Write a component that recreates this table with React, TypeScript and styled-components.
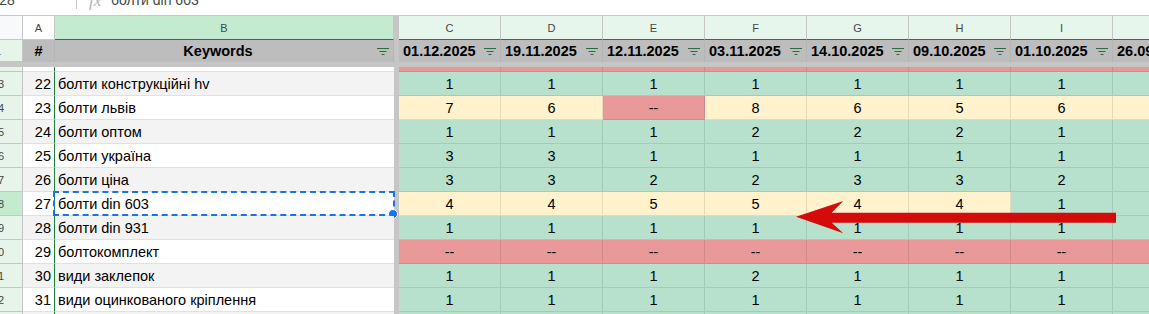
import React from 'react';
import styled, { createGlobalStyle } from 'styled-components';

const GlobalStyle = createGlobalStyle`
	html, body {
		margin: 0;
		padding: 0;
		background: #ffffff;
	}
	body {
		font-family: "Liberation Sans", Arial, sans-serif;
	}
`;

type Tone = 'green' | 'yellow' | 'red';

const toneBg: Record<Tone, string> = {
	green: '#b7e1cd',
	yellow: '#fff2cc',
	red: '#ea9999',
};

const GRID = '#e1e1e1';
const HEAD_LINE = '#c4c7c5';
const SHEET_GREEN = '#188038';

const Sheet = styled.div`
	position: relative;
	width: 1149px;
	height: 314px;
	overflow: hidden;
	font-size: 14.5px;
	color: #000;
`;

const FormulaBar = styled.div`
	display: flex;
	align-items: flex-end;
	height: 15px;
	border-bottom: 1px solid ${HEAD_LINE};
	overflow: hidden;
	color: #444746;
	font-size: 14px;
	line-height: 16px;
`;

const NameBox = styled.div`
	display: flex;
	justify-content: space-between;
	width: 80px;
	margin-left: -10px;
	margin-bottom: 7px;
	padding-right: 6px;
`;

const Caret = styled.span`
	font-size: 11px;
	line-height: 10px;
	margin-top: -5px;
`;

const Separator = styled.div`
	align-self: flex-start;
	width: 1px;
	height: 9px;
	margin: 0 12px 0 0;
	background: #c4c7c5;
`;

const Fx = styled.span`
	font-family: "Liberation Serif", serif;
	font-style: italic;
	font-size: 17px;
	color: #b0b3b6;
	margin-bottom: 6px;
	width: 22px;
`;

const FormulaText = styled.span`
	margin-bottom: 7px;
`;

const Row = styled.div<{ $h: number }>`
	display: flex;
	height: ${(p) => p.$h}px;
`;

const Corner = styled.div`
	flex: 0 0 23px;
	box-sizing: border-box;
	background: #f8f9fa;
	border-right: 1px solid ${HEAD_LINE};
	border-bottom: 1px solid ${HEAD_LINE};
`;

const ColLetter = styled.div<{ $w: number; $bg: string; $line: string }>`
	flex: 0 0 ${(p) => p.$w}px;
	box-sizing: border-box;
	display: flex;
	align-items: center;
	justify-content: center;
	background: ${(p) => p.$bg};
	border-right: 1px solid ${HEAD_LINE};
	border-bottom: 1px solid ${(p) => p.$line};
	font-size: 11px;
	color: #444746;
`;

const Divider = styled.div`
	flex: 0 0 5px;
	background: #c6c6c6;
`;

const FreezeBar = styled.div`
	height: 5px;
	background: #c6c6c6;
`;

const RowNum = styled.div<{ $selected?: boolean }>`
	flex: 0 0 23px;
	box-sizing: border-box;
	display: flex;
	align-items: center;
	overflow: hidden;
	background: ${(p) => (p.$selected ? '#c4ead0' : '#e6f4ea')};
	border-right: 1px solid ${HEAD_LINE};
	border-bottom: 1px solid ${HEAD_LINE};
	font-size: 11px;
	color: #444746;
`;

const RowNumLabel = styled.span`
	flex: 0 0 46px;
	margin-left: -25px;
	text-align: center;
`;

const HeadCell = styled.div<{ $w: number }>`
	flex: 0 0 ${(p) => p.$w}px;
	box-sizing: border-box;
	display: flex;
	align-items: center;
	padding: 0 4px;
	background: #bdbdbd;
	border-right: 1px solid rgba(0, 0, 0, 0.04);
	font-weight: 700;
	white-space: nowrap;
	overflow: hidden;
`;

const HeadText = styled.span<{ $center?: boolean }>`
	flex: 1;
	text-align: ${(p) => (p.$center ? 'center' : 'left')};
`;

const NumCell = styled.div<{ $alt: boolean; $green?: boolean }>`
	flex: 0 0 32px;
	box-sizing: border-box;
	display: flex;
	align-items: center;
	justify-content: flex-end;
	padding-right: 3px;
	background: ${(p) => (p.$alt ? '#f3f3f3' : '#ffffff')};
	border-right: 1px solid ${(p) => (p.$green ? SHEET_GREEN : HEAD_LINE)};
	border-bottom: 1px solid ${GRID};
`;

const KeywordCell = styled.div<{ $alt: boolean }>`
	position: relative;
	flex: 0 0 339px;
	box-sizing: border-box;
	display: flex;
	align-items: center;
	padding-left: 3px;
	background: ${(p) => (p.$alt ? '#f3f3f3' : '#ffffff')};
	border-bottom: 1px solid ${GRID};
	white-space: nowrap;
`;

const ValueCell = styled.div<{ $tone: Tone }>`
	flex: 0 0 102px;
	box-sizing: border-box;
	display: flex;
	align-items: center;
	justify-content: center;
	background: ${(p) => toneBg[p.$tone]};
	border-right: 1px solid rgba(0, 0, 0, 0.1);
	border-bottom: 1px solid rgba(0, 0, 0, 0.1);
`;

const Selection = styled.div`
	position: absolute;
	top: -1px;
	left: -2px;
	right: -1px;
	bottom: -1px;
	border: 2px dashed #1a73e8;
	pointer-events: none;
`;

const Handle = styled.div`
	position: absolute;
	right: -5px;
	bottom: -5px;
	width: 8px;
	height: 8px;
	border-radius: 50%;
	background: #1a73e8;
	border: 1px solid #ffffff;
`;

const Arrow = styled.svg`
	position: absolute;
	left: 790px;
	top: 198px;
`;

const FilterIcon = () => (
	<svg width="12" height="8" viewBox="0 0 12 8">
		<path d="M0 1.5h12M2.5 4.5h7M4.5 7.5h3" stroke="#2b6a45" strokeWidth="1" />
	</svg>
);

const dates = [
	'01.12.2025',
	'19.11.2025',
	'12.11.2025',
	'03.11.2025',
	'14.10.2025',
	'09.10.2025',
	'01.10.2025',
	'26.09.2025',
];
const letters = ['C', 'D', 'E', 'F', 'G', 'H', 'I', 'J'];

interface RowData {
	row: number;
	idx: number;
	keyword: string;
	values: string[];
	last: Tone;
}

const data: RowData[] = [
	{ row: 23, idx: 22, keyword: 'болти конструкційні hv', values: ['1', '1', '1', '1', '1', '1', '1'], last: 'green' },
	{ row: 24, idx: 23, keyword: 'болти львів', values: ['7', '6', '--', '8', '6', '5', '6'], last: 'yellow' },
	{ row: 25, idx: 24, keyword: 'болти оптом', values: ['1', '1', '1', '2', '2', '2', '1'], last: 'green' },
	{ row: 26, idx: 25, keyword: 'болти україна', values: ['3', '3', '1', '1', '1', '1', '1'], last: 'green' },
	{ row: 27, idx: 26, keyword: 'болти ціна', values: ['3', '3', '2', '2', '3', '3', '2'], last: 'green' },
	{ row: 28, idx: 27, keyword: 'болти din 603', values: ['4', '4', '5', '5', '4', '4', '1'], last: 'green' },
	{ row: 29, idx: 28, keyword: 'болти din 931', values: ['1', '1', '1', '1', '1', '1', '1'], last: 'green' },
	{ row: 30, idx: 29, keyword: 'болтокомплект', values: ['--', '--', '--', '--', '--', '--', '--'], last: 'red' },
	{ row: 31, idx: 30, keyword: 'види заклепок', values: ['1', '1', '1', '2', '1', '1', '1'], last: 'green' },
	{ row: 32, idx: 31, keyword: 'види оцинкованого кріплення', values: ['1', '1', '1', '1', '1', '1', '1'], last: 'green' },
	{ row: 33, idx: 32, keyword: '', values: ['', '', '', '', '', '', ''], last: 'green' },
];

const toneOf = (v: string): Tone => {
	if (v === '--') return 'red';
	const n = Number(v);
	if (n >= 4) return 'yellow';
	return 'green';
};

const SELECTED_ROW = 28;

const App: React.FC = () => {
	return (
		<Sheet>
			<GlobalStyle />
			<FormulaBar>
				<NameBox>
					<span>B28</span>
					<Caret>▾</Caret>
				</NameBox>
				<Separator />
				<Fx>fx</Fx>
				<FormulaText>болти din 603</FormulaText>
			</FormulaBar>

			<Row $h={24}>
				<Corner />
				<ColLetter $w={32} $bg="#ffffff" $line={HEAD_LINE}>
					A
				</ColLetter>
				<ColLetter $w={339} $bg="#c4ead0" $line={SHEET_GREEN}>
					B
				</ColLetter>
				<Divider />
				{letters.map((l) => (
					<ColLetter key={l} $w={102} $bg="#e6f6ec" $line={SHEET_GREEN}>
						{l}
					</ColLetter>
				))}
			</Row>

			<Row $h={22}>
				<RowNum>
					<RowNumLabel>1</RowNumLabel>
				</RowNum>
				<HeadCell $w={32}>
					<HeadText $center>#</HeadText>
				</HeadCell>
				<HeadCell $w={339}>
					<HeadText $center>Keywords</HeadText>
					<FilterIcon />
				</HeadCell>
				<Divider />
				{dates.map((d) => (
					<HeadCell key={d} $w={102}>
						<HeadText>{d}</HeadText>
						<FilterIcon />
					</HeadCell>
				))}
			</Row>

			<FreezeBar />

			<Row $h={5}>
				<RowNum />
				<NumCell $alt={false} $green />
				<KeywordCell $alt={false} />
				<Divider />
				{letters.map((l) => (
					<ValueCell key={l} $tone="red" />
				))}
			</Row>

			{data.map((r) => {
				const alt = r.idx % 2 === 0;
				const selected = r.row === SELECTED_ROW;
				return (
					<Row key={r.row} $h={24}>
						<RowNum $selected={selected}>
							<RowNumLabel>{r.row}</RowNumLabel>
						</RowNum>
						<NumCell $alt={alt} $green>
							{r.keyword ? r.idx : ''}
						</NumCell>
						<KeywordCell $alt={alt}>
							{r.keyword}
							{selected && (
								<Selection>
									<Handle />
								</Selection>
							)}
						</KeywordCell>
						<Divider />
						{r.values.map((v, i) => (
							<ValueCell key={i} $tone={v ? toneOf(v) : 'green'}>
								{v}
							</ValueCell>
						))}
						<ValueCell $tone={r.last} />
					</Row>
				);
			})}

			<Arrow width="330" height="40" viewBox="0 0 330 40">
				<path
					d="M6 18.7 L53.3 3 L41.7 14.7 L326 14.7 L326 24.7 L41.7 24.7 L53.3 35.3 Z"
					fill="#d50b0b"
				/>
			</Arrow>
		</Sheet>
	);
};

export default App;
